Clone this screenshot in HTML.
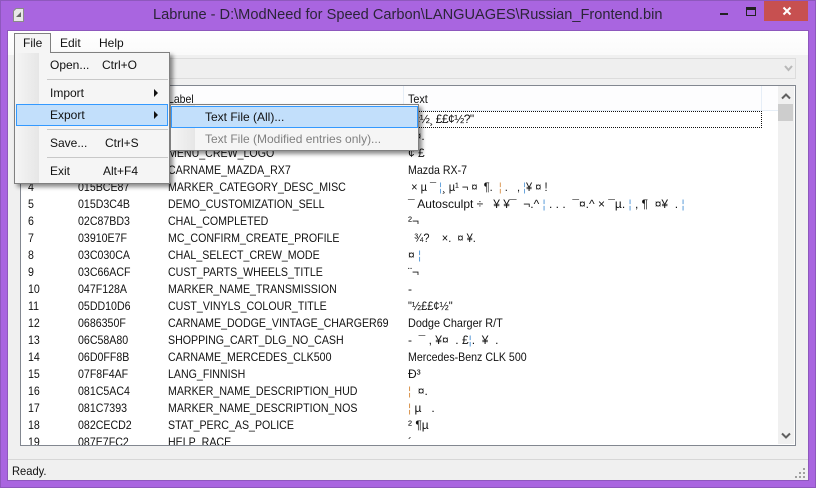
<!DOCTYPE html>
<html><head><meta charset="utf-8"><style>
html,body{margin:0;padding:0}
body{width:816px;height:488px;overflow:hidden;position:relative;background:#a965e0;font:12px "Liberation Sans",sans-serif;color:#111}
div,span{position:absolute;white-space:nowrap}
.t{line-height:17px;height:17px}
.r{left:0;width:780px;height:17px;line-height:17px}
.r span{top:0;transform:scaleX(.885);transform-origin:0 50%}
.a{left:7px}.b{left:57px}.c{left:147px}.d{left:387px}
.r span.g{transform:none}
i{font-style:normal;color:#5a9bd8}
b{font-weight:normal;color:#d8924a}
.sep{height:1px;background:#c8c8c8}
.mi{line-height:16px;height:16px}
</style></head><body>
<div style="left:0;top:0;width:814px;height:486px;border:1px solid #8e58bd"></div>
<svg style="position:absolute;left:13px;top:8px" width="11" height="14"><path d="M3 .5h7.500v13H.5V3z" fill="#e8e8e8" stroke="#8a8a8a"/><path d="M3 9l5-5v5z" fill="#666"/></svg>
<div style="left:153px;top:6px;font-size:14.6px;line-height:18px;color:#2b2438">Labrune - D:\ModNeed for Speed Carbon\LANGUAGES\Russian_Frontend.bin</div>
<div style="left:720px;top:13px;width:8px;height:2px;background:#222"></div>
<div style="left:746px;top:7px;height:5px;border:1px solid #222;border-top-width:3px;width:8px"></div>
<div style="left:764px;top:1px;width:44px;height:20px;background:#c75050"></div>
<svg style="position:absolute;left:782px;top:6px" width="10" height="10"><path d="M1.500 1.500l7 7M8.500 1.500l-7 7" stroke="#fff" stroke-width="2"/></svg>

<div style="left:7px;top:30px;width:802px;height:451px;background:#8e58bd"></div>
<div style="left:8px;top:31px;width:800px;height:449px;background:#f0f0f0"></div>
<div style="left:8px;top:31px;width:800px;height:24px;background:linear-gradient(#fff,#fafafa)"></div>
<div class="t" style="left:60px;top:35px">Edit</div>
<div class="t" style="left:99px;top:35px">Help</div>

<div style="box-sizing:border-box;border:1px solid #dcdcdc;left:20px;width:776px;top:58px;height:21px;background:#efefef"></div>
<svg style="position:absolute;left:784px;top:65px" width="9" height="7"><path d="M1 1l3.500 4 3.500-4" fill="none" stroke="#b8b8b8" stroke-width="2"/></svg>

<div style="left:20px;top:85px;width:776px;height:361px;box-sizing:border-box;border:1px solid #828790;background:#fff"></div>
<div style="left:21px;top:86px;width:757px;height:359px;overflow:hidden;background:#fff;color:#111">
  <div style="left:0;top:0;width:757px;height:24px;background:#fdfdfe"></div>
  <div style="left:382px;top:0;width:1px;height:24px;background:#e6eef7"></div>
  <div style="left:740px;top:0;width:1px;height:24px;background:#e6eef7"></div>
  <div style="left:0;top:24px;width:757px;height:1px;background:#e6eef7"></div>
  <div class="t" style="left:147px;top:5px;transform:scaleX(.875);transform-origin:0 50%">Label</div>
  <div class="t" style="left:387px;top:5px;transform:scaleX(.9);transform-origin:0 50%">Text</div>
  <div style="left:0;top:25px;width:741px;height:17px;box-sizing:border-box;border:1px dotted #111"></div>
  <div class="r" style="top:25px"><span class="d g" style="letter-spacing:-.5px">&nbsp; «½¸ ££¢½?"</span></div>
  <div class="r" style="top:42px"><span class="d g">&nbsp; ¤.</span></div>
  <div class="r" style="top:59px"><span class="c">MENU_CREW_LOGO</span><span class="d g">¢ £</span></div>
  <div class="r" style="top:76px"><span class="a">3</span><span class="b">0155E0F1</span><span class="c">CARNAME_MAZDA_RX7</span><span class="d">Mazda RX-7</span></div>
  <div class="r" style="top:93px"><span class="a">4</span><span class="b">015BCE87</span><span class="c">MARKER_CATEGORY_DESC_MISC</span><span class="d" style="transform:scaleX(.92)">&nbsp;× µ ¯ <i>¦</i>¸ µ¹ ¬ ¤ &nbsp;¶.&nbsp; <b>¦</b> . &nbsp; , <i>¦</i>¥ ¤ !</span></div>
  <div class="r" style="top:110px"><span class="a">5</span><span class="b">015D3C4B</span><span class="c">DEMO_CUSTOMIZATION_SELL</span><span class="d g">¯ Autosculpt ÷ &nbsp; ¥ ¥¯ &nbsp;¬.^ <i>¦</i> . . . &nbsp;¯¤.^ × ¯µ. <i>¦</i> , ¶ &nbsp;¤¥ &nbsp;. <i>¦</i></span></div>
  <div class="r" style="top:127px"><span class="a">6</span><span class="b">02C87BD3</span><span class="c">CHAL_COMPLETED</span><span class="d g">²¬</span></div>
  <div class="r" style="top:144px"><span class="a">7</span><span class="b">03910E7F</span><span class="c">MC_CONFIRM_CREATE_PROFILE</span><span class="d" style="transform:scaleX(.92)">&nbsp; ¾? &nbsp; &nbsp;×. &nbsp;¤ ¥.</span></div>
  <div class="r" style="top:161px"><span class="a">8</span><span class="b">03C030CA</span><span class="c">CHAL_SELECT_CREW_MODE</span><span class="d g">¤ <i>¦</i></span></div>
  <div class="r" style="top:178px"><span class="a">9</span><span class="b">03C66ACF</span><span class="c">CUST_PARTS_WHEELS_TITLE</span><span class="d g">¨¬</span></div>
  <div class="r" style="top:195px"><span class="a">10</span><span class="b">047F128A</span><span class="c">MARKER_NAME_TRANSMISSION</span><span class="d g">-</span></div>
  <div class="r" style="top:212px"><span class="a">11</span><span class="b">05DD10D6</span><span class="c">CUST_VINYLS_COLOUR_TITLE</span><span class="d" style="transform:scaleX(.92)">"½££¢½"</span></div>
  <div class="r" style="top:229px"><span class="a">12</span><span class="b">0686350F</span><span class="c">CARNAME_DODGE_VINTAGE_CHARGER69</span><span class="d" style="transform:scaleX(.905)">Dodge Charger R/T</span></div>
  <div class="r" style="top:246px"><span class="a">13</span><span class="b">06C58A80</span><span class="c">SHOPPING_CART_DLG_NO_CASH</span><span class="d g">- &nbsp;¯ , ¥¤ &nbsp;. £<i>¦</i>. &nbsp;¥ &nbsp;.</span></div>
  <div class="r" style="top:263px"><span class="a">14</span><span class="b">06D0FF8B</span><span class="c">CARNAME_MERCEDES_CLK500</span><span class="d">Mercedes-Benz CLK 500</span></div>
  <div class="r" style="top:280px"><span class="a">15</span><span class="b">07F8F4AF</span><span class="c">LANG_FINNISH</span><span class="d g">Ð³</span></div>
  <div class="r" style="top:297px"><span class="a">16</span><span class="b">081C5AC4</span><span class="c">MARKER_NAME_DESCRIPTION_HUD</span><span class="d g"><b>¦</b> &nbsp;¤.</span></div>
  <div class="r" style="top:314px"><span class="a">17</span><span class="b">081C7393</span><span class="c">MARKER_NAME_DESCRIPTION_NOS</span><span class="d g"><b>¦</b> µ &nbsp; .</span></div>
  <div class="r" style="top:331px"><span class="a">18</span><span class="b">082CECD2</span><span class="c">STAT_PERC_AS_POLICE</span><span class="d g">² ¶µ</span></div>
  <div class="r" style="top:348px"><span class="a">19</span><span class="b">087E7FC2</span><span class="c">HELP_RACE</span><span class="d g">´</span></div>
</div>
<div style="left:778px;top:86px;width:16px;height:358px;background:#f0f0f0"></div>
<div style="left:778px;top:104px;width:15px;height:17px;background:#cdcdcd"></div>
<svg style="position:absolute;left:781px;top:93px" width="10" height="7"><path d="M1 5.500l4-4 4 4" fill="none" stroke="#606060" stroke-width="2"/></svg>
<svg style="position:absolute;left:781px;top:432px" width="10" height="7"><path d="M1 1.500l4 4 4-4" fill="none" stroke="#606060" stroke-width="2"/></svg>

<div style="left:8px;top:459px;width:800px;height:1px;background:#d7d7d7"></div>
<div class="t" style="left:12px;top:463px;transform:scaleX(.93);transform-origin:0 50%">Ready.</div>
<svg style="position:absolute;left:795px;top:467px" width="12" height="12" fill="#a0a0a0"><rect x="8" y="1" width="2" height="2"/><rect x="4" y="5" width="2" height="2"/><rect x="8" y="5" width="2" height="2"/><rect x="0" y="9" width="2" height="2"/><rect x="4" y="9" width="2" height="2"/><rect x="8" y="9" width="2" height="2"/></svg>

<div style="left:14px;top:33px;width:37px;height:20px;box-sizing:border-box;border:1px solid #808080;border-bottom:0;background:#f5f5f5;z-index:3"></div>
<div class="t" style="left:23px;top:35px;z-index:4">File</div>

<div style="left:14px;top:52px;width:156px;height:132px;box-sizing:border-box;border:1px solid #808080;background:#f5f5f5;box-shadow:3px 3px 4px rgba(0,0,0,.45);z-index:2">
  <div style="left:0;top:0;width:24px;height:130px;background:linear-gradient(90deg,#f5f5f5,#e6e6e6)"></div>
  <div class="sep" style="left:32px;top:26px;width:121px"></div>
  <div class="sep" style="left:32px;top:76px;width:121px"></div>
  <div class="sep" style="left:32px;top:104px;width:121px"></div>
  <div style="left:1px;top:51px;width:152px;height:22px;box-sizing:border-box;border:1px solid #3399ff;background:#c2dffb"></div>
  <div class="mi" style="left:35px;top:4px">Open...</div><div class="mi" style="left:87px;top:4px">Ctrl+O</div>
  <div class="mi" style="left:35px;top:32px">Import</div>
  <div class="mi" style="left:35px;top:54px">Export</div>
  <div class="mi" style="left:35px;top:82px">Save...</div><div class="mi" style="left:90px;top:82px">Ctrl+S</div>
  <div class="mi" style="left:35px;top:110px">Exit</div><div class="mi" style="left:88px;top:110px">Alt+F4</div>
  <svg style="position:absolute;left:139px;top:36px" width="5" height="8"><path d="M0 0l4 4-4 4z" fill="#111"/></svg>
  <svg style="position:absolute;left:139px;top:58px" width="5" height="8"><path d="M0 0l4 4-4 4z" fill="#111"/></svg>
</div>

<div style="left:170px;top:104px;width:249px;height:47px;box-sizing:border-box;border:1px solid #808080;background:#f5f5f5;box-shadow:3px 3px 4px rgba(0,0,0,.45);z-index:5">
  <div style="left:0;top:0;width:24px;height:45px;background:linear-gradient(90deg,#f5f5f5,#e6e6e6)"></div>
  <div style="left:0;top:1px;width:247px;height:22px;box-sizing:border-box;border:1px solid #3399ff;background:#c2dffb"></div>
  <div class="mi" style="left:34px;top:4px">Text File (All)...</div>
  <div class="mi" style="left:34px;top:26px;color:#808080">Text File (Modified entries only)...</div>
</div>
</body></html>
